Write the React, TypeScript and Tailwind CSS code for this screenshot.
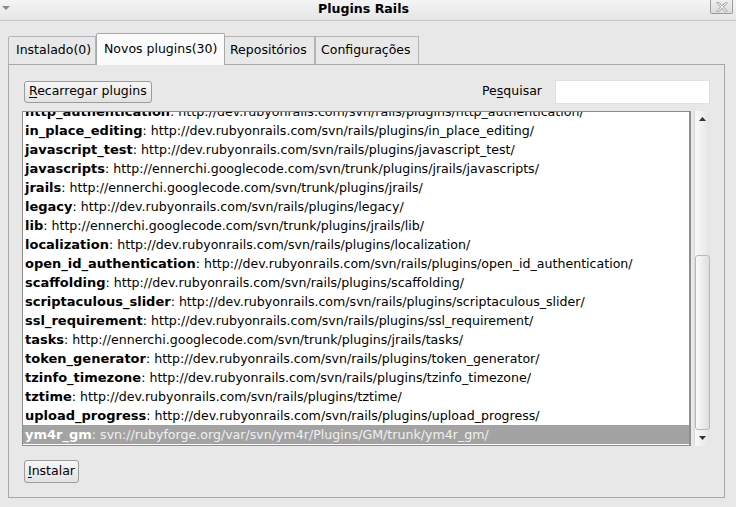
import React from "react";

const rows: [string, string][] = [
  ["http_authentication", "http://dev.rubyonrails.com/svn/rails/plugins/http_authentication/"],
  ["in_place_editing", "http://dev.rubyonrails.com/svn/rails/plugins/in_place_editing/"],
  ["javascript_test", "http://dev.rubyonrails.com/svn/rails/plugins/javascript_test/"],
  ["javascripts", "http://ennerchi.googlecode.com/svn/trunk/plugins/jrails/javascripts/"],
  ["jrails", "http://ennerchi.googlecode.com/svn/trunk/plugins/jrails/"],
  ["legacy", "http://dev.rubyonrails.com/svn/rails/plugins/legacy/"],
  ["lib", "http://ennerchi.googlecode.com/svn/trunk/plugins/jrails/lib/"],
  ["localization", "http://dev.rubyonrails.com/svn/rails/plugins/localization/"],
  ["open_id_authentication", "http://dev.rubyonrails.com/svn/rails/plugins/open_id_authentication/"],
  ["scaffolding", "http://dev.rubyonrails.com/svn/rails/plugins/scaffolding/"],
  ["scriptaculous_slider", "http://dev.rubyonrails.com/svn/rails/plugins/scriptaculous_slider/"],
  ["ssl_requirement", "http://dev.rubyonrails.com/svn/rails/plugins/ssl_requirement/"],
  ["tasks", "http://ennerchi.googlecode.com/svn/trunk/plugins/jrails/tasks/"],
  ["token_generator", "http://dev.rubyonrails.com/svn/rails/plugins/token_generator/"],
  ["tzinfo_timezone", "http://dev.rubyonrails.com/svn/rails/plugins/tzinfo_timezone/"],
  ["tztime", "http://dev.rubyonrails.com/svn/rails/plugins/tztime/"],
  ["upload_progress", "http://dev.rubyonrails.com/svn/rails/plugins/upload_progress/"],
  ["ym4r_gm", "svn://rubyforge.org/var/svn/ym4r/Plugins/GM/trunk/ym4r_gm/"],
];

export default function App() {
  return (
    <div
      className="w-[736px] h-[507px] bg-[#e8e8e8] text-black overflow-hidden flex flex-col text-[12.5px]"
      style={{ fontFamily: '"DejaVu Sans", Verdana, sans-serif' }}
    >
      {/* Title bar */}
      <div className="relative h-[21px] shrink-0 bg-gradient-to-b from-[#f4f4f4] to-[#e6e6e6] border-b border-[#c8c8c8] flex items-center justify-center pr-[9px]">
        <svg className="absolute left-[2px] top-[6px]" width="8" height="5" viewBox="0 0 8 5">
          <path d="M0 0 L8 0 L4 4 Z" fill="#8a8a8a" />
        </svg>
        <span className="font-bold text-[12.6px] leading-none mt-[-1px]">Plugins Rails</span>
        <div className="absolute right-[3px] top-0 w-[23px] h-[14px] border border-t-0 border-[#9a9a9a] rounded-b-[2px] bg-gradient-to-b from-[#efefef] to-[#dcdcdc] flex items-center justify-center">
          <svg width="12" height="10" viewBox="0 0 12 10">
            <path d="M2 1 L10 9 M10 1 L2 9" stroke="#b8b8b8" strokeWidth="3" strokeLinecap="square" />
            <path d="M2 1 L10 9 M10 1 L2 9" stroke="#f6f6f6" strokeWidth="1" />
          </svg>
        </div>
      </div>

      {/* Tabs */}
      <div className="flex items-end pl-[8px] mt-[12px] h-[31px] shrink-0 relative z-10">
        <div className="w-[88px] h-[28px] pl-[7px] flex items-center border border-b-0 border-[#b4b4b4] bg-[#e8e8e8] rounded-tl-[2px]">
          Instalado(0)
        </div>
        <div className="w-[129px] h-[32px] pl-[7px] flex items-start pt-[6px] border border-b-0 border-[#a8a8a8] bg-[#fbfbfb] mb-[-1px] rounded-t-[2px]">
          Novos plugins(30)
        </div>
        <div className="w-[90px] h-[28px] pl-[5px] flex items-center border border-b-0 border-l-0 border-[#b4b4b4] bg-[#e8e8e8]">
          Repositórios
        </div>
        <div className="w-[104px] h-[28px] pl-[5px] flex items-center border border-b-0 border-[#b4b4b4] bg-[#e8e8e8]">
          Configurações
        </div>
      </div>

      {/* Panel */}
      <div className="ml-[8px] w-[717px] h-[434px] border border-[#a8a8a8] bg-[#e8e8e8] flex flex-col pl-[13px] pr-[14px]">
        <div className="flex items-center justify-between mt-[15px] h-[23px]">
          <button className="h-[22px] ml-[2px] px-[4px] border border-[#9c9c9c] rounded-[3px] bg-gradient-to-b from-[#f7f7f7] to-[#e2e2e2] leading-none">
            <span className="underline underline-offset-[2px]">R</span>ecarregar plugins
          </button>
          <div className="flex items-center">
            <span className="mr-[13px]">
              Pe<span className="underline underline-offset-[2px]">s</span>quisar
            </span>
            <div className="w-[155px] h-[24px] bg-white border border-[#e0e0e0]" />
          </div>
        </div>

        <div className="flex mt-[8px] h-[335px]">
          <div className="w-[670px] h-full border border-[#8e8e8e] border-r-2 bg-white overflow-hidden">
            <div className="mt-[-10px]">
              {rows.map(([name, url], i) => {
                const sel = i === rows.length - 1;
                return (
                  <div
                    key={name}
                    className={`h-[19px] leading-[19px] pl-[2px] whitespace-nowrap text-[12.6px] ${
                      sel ? "bg-[#a3a3a3] text-white" : ""
                    }`}
                  >
                    <span className="font-bold text-[13px]">{name}</span>
                    <span className={sel ? "text-[#f0f0f0]" : ""}>: {url}</span>
                  </div>
                );
              })}
            </div>
          </div>
          <div className="ml-[3px] w-[16px] h-full flex flex-col bg-gradient-to-r from-[#fafafa] to-[#e4e4e4] border-l border-[#d8d8d8]">
            <div className="h-[16px] flex items-center justify-center">
              <svg width="7" height="4" viewBox="0 0 7 4">
                <path d="M0 4 L3.5 0 L7 4 Z" fill="#333" />
              </svg>
            </div>
            <div className="flex-1" />
            <div className="h-[175px] border border-[#b8b8b8] rounded-[3px] bg-gradient-to-r from-[#fbfbfb] to-[#dedede]" />
            <div className="h-[16px] flex items-center justify-center">
              <svg width="7" height="4" viewBox="0 0 7 4">
                <path d="M0 0 L7 0 L3.5 4 Z" fill="#333" />
              </svg>
            </div>
          </div>
        </div>

        <div className="mt-[14px]">
          <button className="h-[23px] ml-[2px] px-[3px] border border-[#9c9c9c] rounded-[3px] bg-gradient-to-b from-[#f7f7f7] to-[#e2e2e2] leading-none">
            <span className="underline underline-offset-[2px]">I</span>nstalar
          </button>
        </div>
      </div>
    </div>
  );
}
